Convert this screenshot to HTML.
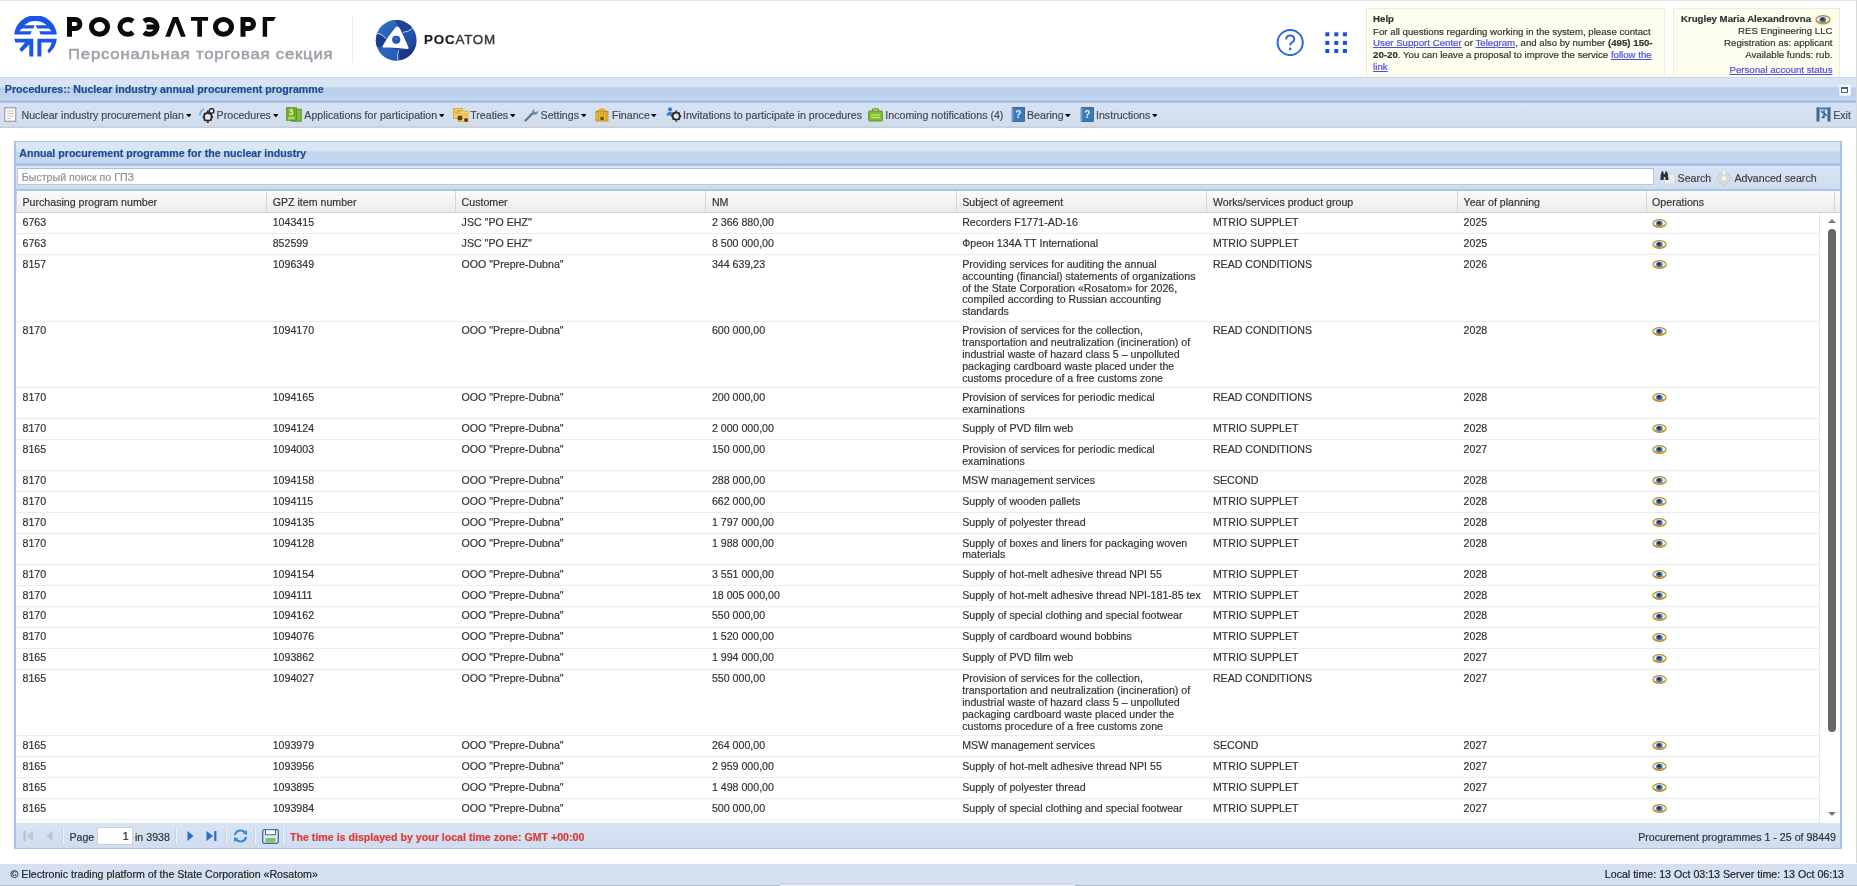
<!DOCTYPE html>
<html><head><meta charset="utf-8">
<style>
*{box-sizing:border-box}
html,body{margin:0;padding:0}
body{width:1857px;height:886px;overflow:hidden;position:relative;will-change:transform;-webkit-text-stroke:0.18px currentColor;background:#fff;font-family:"Liberation Sans",sans-serif;font-size:10.63px;color:#333}
.abs{position:absolute}
.t{position:absolute;white-space:nowrap;line-height:1.117em}
/* header */
#topline{position:absolute;left:0;top:0;width:1857px;height:1px;background:#e2e2e2}
#rline{position:absolute;left:1855.5px;top:0;width:1.5px;height:863px;background:#d8d8d8}
.box{position:absolute;background:#fdfdf0;border:1px solid #f1ecd4;border-bottom:none}
.box a,.lnk{color:#4c4ce0;text-decoration:underline}
/* title bar */
#titlebar{position:absolute;left:0;top:77px;width:1855.5px;height:25.5px;border-top:1px solid #c8d4de;
 background:linear-gradient(#dbe6f4 0px,#d7e3f3 9px,#bad0ea 10px,#bdd2ec 20px,#c8dcf4 21px,#c8dcf4 22px,#a6bfe4 22.5px,#a6bfe4 25.5px)}
#toolbar{position:absolute;left:0;top:102.5px;width:1855.5px;height:25px;background:linear-gradient(#d6e4ee 0px,#d9e0f4 3px,#d4dff0 12px,#d2ddeb 23px,#c6cfd9 24px,#c6cfd9 25px)}
.tb{position:absolute;top:0;height:25px}
.tbt{position:absolute;white-space:nowrap;line-height:11.87px;color:#434a55}
.arr{position:absolute;top:114px;width:0;height:0;border-left:2.7px solid transparent;border-right:2.7px solid transparent;border-top:3.1px solid #000}
/* panel */
#panel{position:absolute;left:13.5px;top:141.3px;width:1828.3px;height:707.9px;border:1px solid #a6c1e6;border-left-width:2px;border-right-width:2px;background:#fff}
#phdr{position:absolute;left:0;top:0;right:0;height:23.4px;background:linear-gradient(#dbe7f5 0px,#d8e5f4 9px,#c3d6ee 10px,#c6d9f0 21px,#a9c4e8 21.4px,#a9c4e8 23.4px)}
#stb{position:absolute;left:0;top:23.4px;right:0;height:26.2px;background:linear-gradient(#dde9f7 0px,#d6e3f2 2px,#d0ddee 22.5px,#a9c4e8 23px,#a9c4e8 26.2px)}
#sinput{position:absolute;left:1.8px;top:2.0px;width:1636.6px;height:17.8px;background:#fff;border:1px solid #c4c8cc;border-top-color:#b8bcc0}
#ghdr{position:absolute;left:0;top:49.2px;right:0;height:21.4px;background:linear-gradient(#fbfbfb,#ececec);border-bottom:1px solid #d0d0d0}
.hc{position:absolute;top:0;height:20.4px;border-left:1px solid #d5d5d5}
.hc span{position:absolute;left:5.5px;top:5.8px;white-space:nowrap;line-height:11.87px;color:#333}
#gbody{position:absolute;left:0;top:71px;right:0;height:609.5px;overflow:hidden;background:#fff}
.row{position:absolute;left:0;width:1803.2px;border-bottom:1px solid #ececec}
.c{position:absolute;top:3.8px;white-space:nowrap;line-height:11.83px;color:#333}
.eye{position:absolute;top:5.3px;width:15px;height:9px;line-height:0}
#sbar{position:absolute;left:1803.5px;top:0;width:20px;height:610.4px;border-left:1px solid #e6e6e6;background:#fff}
#pager{position:absolute;left:0;top:680.5px;right:0;height:25.1px;background:linear-gradient(#d8e4f3,#cfddef)}
.sep{position:absolute;top:4.5px;width:2px;height:17px;border-left:1px solid #c8d5e6;border-right:1px solid #eef3fa}
/* footer */
#footer{position:absolute;left:0;top:863.6px;width:1857px;height:22.4px;background:#d5e1f0;border-bottom:1.5px solid #aab5c2}
</style></head>
<body>
<div id="topline"></div>
<div id="rline"></div>

<!-- ROSELTORG emblem -->
<svg class="abs" style="left:13.5px;top:15.8px" width="43" height="41" viewBox="0 0 43 41">
 <g fill="#1a55e8">
  <path d="M0.2 18.6 A21.4 21.4 0 0 1 42.8 18.6 L26.6 18.6 L25.3 15.2 L37.4 15.2 A17 17 0 0 0 34.9 12.4 L23.2 12.4 L21.8 9.2 L32.8 9.2 A17 17 0 0 0 10.2 9.2 L20.6 9.2 L19.3 12.4 L8.1 12.4 A17 17 0 0 0 5.5 15.2 L17.7 15.2 L16.3 18.6 Z"/>
  <path d="M0.2 22.8 L19.3 22.8 L19.3 40.4 L15.3 40.4 L15.3 28.5 L7.8 36 L5.3 33.3 L11.1 26.6 L1.4 26.6 Z"/>
  <path d="M23.4 22.8 L42.8 22.8 A21.4 21.4 0 0 1 34.8 37.4 L33.4 34.4 A17.2 17.2 0 0 0 37.8 26.6 L27.4 26.6 L27.4 40.4 L23.4 40.4 Z"/>
 </g>
</svg>
<svg class="abs" style="left:0;top:0" width="290" height="45" viewBox="0 0 290 45">
 <g fill="none" stroke="#0a0a0a" stroke-width="5">
  <path d="M69.5 36.7 V19.5 H75.4 A4.5 4.5 0 0 1 75.4 28.5 H69.5"/>
  <ellipse cx="99.5" cy="26.85" rx="8" ry="7.35"/>
  <path d="M133 21.2 A7.9 7.45 0 1 0 133 32.5"/>
  <path d="M144 21.2 A7.9 7.45 0 1 1 144 32.5 M146.5 27 H157.5" />
  <ellipse cx="223.5" cy="26.85" rx="8" ry="7.35"/>
  <path d="M243 36.7 V19.5 H249 A4.5 4.5 0 0 1 249 28.5 H243"/>
 </g>
 <g fill="#0a0a0a">
  <path d="M165.2 36.7 L172.9 17 L178.1 17 L185.8 36.7 L180.9 36.7 L175.5 22.4 L170.1 36.7 Z"/>
  <rect x="191" y="17" width="17.1" height="3.8"/>
  <rect x="197.3" y="17" width="4.7" height="19.7"/>
  <path d="M262.7 17 L275.9 17 L273.6 21 L267.1 21 L267.1 36.7 L262.7 36.7 Z"/>
 </g>
</svg>
<div class="t" style="left:68.3px;top:44.6px;font-size:15.2px;font-weight:400;color:#9ca1a8;letter-spacing:0.72px;-webkit-text-stroke:0.5px #9ca1a8;transform:scaleX(1.1);transform-origin:0 0">Персональная торговая секция</div>
<div class="abs" style="left:351.8px;top:16px;width:1.2px;height:46px;background:#ececec"></div>
<!-- ROSATOM emblem -->
<svg class="abs" style="left:375px;top:19.5px" width="43" height="41" viewBox="0 0 43 41">
 <defs>
  <linearGradient id="rg1" x1="0" y1="0" x2="1" y2="1"><stop offset="0" stop-color="#3278c8"/><stop offset="0.5" stop-color="#2458b0"/><stop offset="1" stop-color="#183888"/></linearGradient>
  <clipPath id="cc"><circle cx="21.2" cy="20.25" r="20.4"/></clipPath>
 </defs>
 <circle cx="21.2" cy="20.25" r="20.4" fill="url(#rg1)"/>
 <g clip-path="url(#cc)">
  <path d="M0 13 Q6 14 11 19 L8 27 L0 27 Z" fill="#1a2f80" opacity="0.75"/>
  <path d="M20 0 L40 0 L38 9 Q32 11 28 13 L23 6 Z" fill="#1a3488" opacity="0.7"/>
  <path d="M24 30 L36 29 L42 22 L42 41 L26 41 Z" fill="#1a3080" opacity="0.7"/>
  <path d="M6 26 L22 30 L22 41 L4 41 Z" fill="#2f70c8" opacity="0.5"/>
 </g>
 <path d="M22 6.6 Q24 6.4 25.5 9.5 L33.6 27.6 Q34 29 32.2 28.9 Q21 27 8.6 27.5 Q6.8 27.4 7.8 25.6 Q14 15 20.2 7.8 Q21 6.8 22 6.6 Z" fill="#fff"/>
 <circle cx="21.2" cy="19.8" r="4.1" fill="#2458b0"/>
 <circle cx="20.6" cy="19" r="1.8" fill="#3a80d0" opacity="0.6"/>
 <path d="M1.5 12.8 Q7 13.8 11.5 19" stroke="#c8dcf6" stroke-width="0.9" fill="none"/>
 <path d="M38 8.2 Q33 12 28 12.3" stroke="#c8dcf6" stroke-width="0.9" fill="none"/>
 <path d="M23.6 30 Q22 34 22.8 40.5" stroke="#c8dcf6" stroke-width="0.9" fill="none"/>
</svg>
<div class="t" style="left:424px;top:32.6px;font-size:13.4px;font-weight:700;color:#1c1c1c;letter-spacing:0.9px">РОС<span style="font-weight:400;color:#3a3a3a;-webkit-text-stroke:0.45px #3a3a3a">АТОМ</span></div>

<!-- help / apps icons -->
<svg class="abs" style="left:1276px;top:29px" width="29" height="27" viewBox="0 0 29 27">
 <circle cx="14.2" cy="13.5" r="12.6" fill="none" stroke="#2c6bd8" stroke-width="2"/>
 <path d="M10.2 10.4 Q10.2 6.6 14.2 6.6 Q18.2 6.6 18.2 10.2 Q18.2 12.4 15.6 13.6 Q14.2 14.3 14.2 16.6" fill="none" stroke="#2c6bd8" stroke-width="2"/>
 <circle cx="14.2" cy="19.9" r="1.3" fill="#2c6bd8"/>
</svg>
<svg class="abs" style="left:1325px;top:32px" width="23" height="22" viewBox="0 0 23 22">
 <g fill="#1c50d8">
 <rect x="0.3" y="0.3" width="4" height="4"/><rect x="9.3" y="0.3" width="4" height="4"/><rect x="17.9" y="0.3" width="4" height="4"/>
 <rect x="0.3" y="8.9" width="4" height="4"/><rect x="9.3" y="8.9" width="4" height="4"/><rect x="17.9" y="8.9" width="4" height="4"/>
 <rect x="0.3" y="17" width="4" height="4"/><rect x="9.3" y="17" width="4" height="4"/><rect x="17.9" y="17" width="4" height="4"/>
 </g>
</svg>

<!-- help box -->
<div class="box" style="left:1365.6px;top:7.7px;width:299.5px;height:70px;font-size:9.67px;line-height:11.8px;color:#333">
 <div class="t" style="left:6.5px;top:4.3px;font-weight:700;line-height:11.8px">Help</div>
 <div class="abs" style="left:6.5px;top:16.9px;width:290px;line-height:11.8px;white-space:nowrap">For all questions regarding working in the system, please contact<br><a>User Support Center</a> or <a>Telegram</a>, and also by number <b>(495) 150-</b><br><b>20-20</b>. You can leave a proposal to improve the service <a>follow the</a><br><a>link</a></div>
</div>
<!-- user box -->
<div class="box" style="left:1673.3px;top:7.7px;width:166.4px;height:70px;font-size:9.67px;color:#333;text-align:right">
 <div class="abs" style="right:6.2px;top:4.5px;line-height:11.8px;white-space:nowrap;font-weight:700">Krugley Maria Alexandrovna<span style="display:inline-block;width:21.5px"></span></div>
 <svg class="abs" style="left:1815px;top:15px;position:fixed" width="16" height="9.5" viewBox="0 0 15 9"><ellipse cx="7.5" cy="4.5" rx="6.6" ry="3.8" fill="#f4f8fb" stroke="#b8953a" stroke-width="1.3"/><path d="M1.6 5.6 Q7.5 9.4 13.4 5.6" fill="none" stroke="#d8902a" stroke-width="1"/><ellipse cx="7.3" cy="4.4" rx="3.2" ry="2.6" fill="#3f6e9c"/><circle cx="6.9" cy="3.9" r="1.2" fill="#102840"/></svg>
 <div class="abs" style="right:6.2px;top:16.8px;line-height:11.8px;white-space:nowrap">RES Engineering LLC<br>Registration as: applicant<br>Available funds: rub.</div>
 <div class="abs" style="right:6.2px;top:55.4px;line-height:11.8px;white-space:nowrap"><a>Personal account status</a></div>
</div>

<!-- title bar -->
<div id="titlebar">
 <div class="t" style="left:4.8px;top:5.7px;font-weight:700;color:#1e4a92;line-height:11.87px">Procedures:: Nuclear industry annual procurement programme</div>
 <div class="abs" style="left:1839px;top:6px;width:11.5px;height:11.5px;background:#fff;border-radius:2px;border:1px solid #e8eef8"><div class="abs" style="left:1.3px;top:2.2px;width:7px;height:5.5px;border:1.2px solid #3b5fa8;border-top-width:2px"></div></div>
</div>

<!-- toolbar -->
<div id="toolbar">
<div class="abs" style="left:3.8px;top:4.7px;line-height:0"><svg width="13" height="15" viewBox="0 0 13 15"><rect x="0.8" y="0.8" width="11" height="13.4" fill="#fcfcfc" stroke="#8a9098" stroke-width="1"/><path d="M3 4h7M3 6.5h7M3 9h7M3 11.5h4" stroke="#c8b090" stroke-width="0.8"/></svg></div>
<div class="tbt" style="left:21.5px;top:7.1px">Nuclear industry procurement plan</div>
<svg class="abs" style="left:185.5px;top:11.5px" width="5.6" height="3.4" viewBox="0 0 5.6 3.4"><path d="M0 0H5.6L2.8 3.4Z" fill="#000"/></svg>
<div class="abs" style="left:199px;top:5.1px;line-height:0"><svg width="16" height="15" viewBox="0 0 16 15"><path d="M0.8 7.5 Q1.5 2.5 4.8 0.8" stroke="#6aaee0" stroke-width="1.6" fill="none"/><g stroke="#2a2a2a" stroke-width="1.9" stroke-linecap="butt"><path d="M8.8 2.6V4.2M8.8 13.6V15M3.6 8.9H5.2M12.4 8.9H14M5.1 5.2L6.2 6.3M11.4 11.5L12.5 12.6M5.1 12.6L6.2 11.5M11.4 6.3L12.5 5.2"/></g><circle cx="8.8" cy="8.9" r="3.9" fill="#e6e6e6" stroke="#2a2a2a" stroke-width="1.9"/><circle cx="12.6" cy="2.9" r="2.3" fill="#f2f2f2" stroke="#2a2a2a" stroke-width="1.5"/></svg></div>
<div class="tbt" style="left:216.6px;top:7.1px">Procedures</div>
<svg class="abs" style="left:272.5px;top:11.5px" width="5.6" height="3.4" viewBox="0 0 5.6 3.4"><path d="M0 0H5.6L2.8 3.4Z" fill="#000"/></svg>
<div class="abs" style="left:286px;top:4.7px;line-height:0"><svg width="16" height="15" viewBox="0 0 16 15"><rect x="5.5" y="2" width="10" height="12.5" fill="#74b030" stroke="#5a9020" stroke-width="0.6"/><path d="M13 4v9" stroke="#c8e890" stroke-width="0.9" stroke-dasharray="1 1"/><rect x="0.5" y="0.5" width="10" height="13" fill="#6eae26" stroke="#4e8a18" stroke-width="0.6"/><text x="2.6" y="8.2" font-size="9" font-weight="700" fill="#e4f6b8" font-family="Liberation Sans">3</text><path d="M2 10.2h6.5M2 11.8h6.5" stroke="#d0f0a0" stroke-width="0.8"/></svg></div>
<div class="tbt" style="left:304.3px;top:7.1px">Applications for participation</div>
<svg class="abs" style="left:438.8px;top:11.5px" width="5.6" height="3.4" viewBox="0 0 5.6 3.4"><path d="M0 0H5.6L2.8 3.4Z" fill="#000"/></svg>
<div class="abs" style="left:452.6px;top:5.0px;line-height:0"><svg width="16" height="14" viewBox="0 0 16 14"><rect x="0.5" y="0.5" width="9" height="10" fill="#f0d060" stroke="#c8a030" stroke-width="0.7"/><rect x="5" y="3" width="10" height="10.5" fill="#f4d868" stroke="#c8a030" stroke-width="0.7"/><path d="M2 3h6M2 5h6M7 6h7M7 8h7" stroke="#c89838" stroke-width="0.6"/><circle cx="7" cy="10" r="2.5" fill="#6a3a10"/><circle cx="13" cy="12" r="2" fill="#6a3a10"/></svg></div>
<div class="tbt" style="left:470.2px;top:7.1px">Treaties</div>
<svg class="abs" style="left:509.8px;top:11.5px" width="5.6" height="3.4" viewBox="0 0 5.6 3.4"><path d="M0 0H5.6L2.8 3.4Z" fill="#000"/></svg>
<div class="abs" style="left:524px;top:5.5px;line-height:0"><svg width="15" height="14" viewBox="0 0 15 14"><path d="M1.5 12.5 L9 5" stroke="#5a7898" stroke-width="2.3" stroke-linecap="round"/><path d="M8 5.5 Q7.5 2 10.5 1 L10 3.5 L12 4.5 L13.8 2.5 Q14.5 6 11 7 Z" fill="#6a88a8"/></svg></div>
<div class="tbt" style="left:540.6px;top:7.1px">Settings</div>
<svg class="abs" style="left:580.6px;top:11.5px" width="5.6" height="3.4" viewBox="0 0 5.6 3.4"><path d="M0 0H5.6L2.8 3.4Z" fill="#000"/></svg>
<div class="abs" style="left:595.4px;top:5.0px;line-height:0"><svg width="14" height="14" viewBox="0 0 14 14"><path d="M0.5 4 L7 0.5 L13.5 4 Z" fill="#e8b830" stroke="#a87810" stroke-width="0.6"/><rect x="1" y="4" width="12" height="8" fill="#f0c040" stroke="#a87810" stroke-width="0.6"/><path d="M3.5 5v6M6 5v6M8.5 5v6M11 5v6" stroke="#b88818" stroke-width="0.8"/><rect x="0.5" y="12" width="13" height="1.6" fill="#d8a020"/><rect x="5.5" y="9" width="3" height="3" fill="#704808"/></svg></div>
<div class="tbt" style="left:612px;top:7.1px">Finance</div>
<svg class="abs" style="left:651.4px;top:11.5px" width="5.6" height="3.4" viewBox="0 0 5.6 3.4"><path d="M0 0H5.6L2.8 3.4Z" fill="#000"/></svg>
<div class="abs" style="left:665.5px;top:4.8px;line-height:0"><svg width="16" height="15" viewBox="0 0 16 15"><circle cx="4" cy="2.4" r="2.1" fill="#3a78c8"/><path d="M0.5 8.5 Q0.5 5 4 5 Q7 5 7.3 7 L7.3 8.5 Z" fill="#3a78c8"/><g stroke="#2a2a2a" stroke-width="1.8"><path d="M10.2 3.6V5M10.2 13.4V14.8M5.2 9.2H6.6M13.8 9.2H15.2M6.7 5.7L7.7 6.7M12.7 11.7L13.7 12.7M6.7 12.7L7.7 11.7M12.7 6.7L13.7 5.7"/></g><circle cx="10.2" cy="9.2" r="3.5" fill="#e8e8e8" stroke="#2a2a2a" stroke-width="1.8"/></svg></div>
<div class="tbt" style="left:683px;top:7.1px">Invitations to participate in procedures</div>
<div class="abs" style="left:868px;top:5.5px;line-height:0"><svg width="15" height="14" viewBox="0 0 15 14"><rect x="4.5" y="0.8" width="6" height="3" rx="1" fill="none" stroke="#5a9a20" stroke-width="1.2"/><rect x="0.6" y="3" width="13.8" height="10" rx="1.2" fill="#80c030" stroke="#4e8818" stroke-width="0.8"/><path d="M3 7h9M3 9.5h9" stroke="#d8f0a8" stroke-width="0.9"/></svg></div>
<div class="tbt" style="left:885.3px;top:7.1px">Incoming notifications (4)</div>
<div class="abs" style="left:1010.5px;top:4.7px;line-height:0"><svg width="14" height="15" viewBox="0 0 14 15"><rect x="1.5" y="0.5" width="12" height="14" fill="#3a78b8" stroke="#24507e" stroke-width="0.7"/><rect x="0.5" y="1" width="2" height="13.5" fill="#6aa0d0"/><text x="4.3" y="11" font-size="10" font-weight="700" fill="#e8f0ff" font-family="Liberation Sans">?</text></svg></div>
<div class="tbt" style="left:1027px;top:7.1px">Bearing</div>
<svg class="abs" style="left:1065.2px;top:11.5px" width="5.6" height="3.4" viewBox="0 0 5.6 3.4"><path d="M0 0H5.6L2.8 3.4Z" fill="#000"/></svg>
<div class="abs" style="left:1079.5px;top:4.7px;line-height:0"><svg width="14" height="15" viewBox="0 0 14 15"><rect x="1.5" y="0.5" width="12" height="14" fill="#3a78b8" stroke="#24507e" stroke-width="0.7"/><rect x="0.5" y="1" width="2" height="13.5" fill="#6aa0d0"/><text x="4.3" y="11" font-size="10" font-weight="700" fill="#e8f0ff" font-family="Liberation Sans">?</text></svg></div>
<div class="tbt" style="left:1096px;top:7.1px">Instructions</div>
<svg class="abs" style="left:1151.9px;top:11.5px" width="5.6" height="3.4" viewBox="0 0 5.6 3.4"><path d="M0 0H5.6L2.8 3.4Z" fill="#000"/></svg>
<div class="abs" style="left:1816px;top:4.8px;line-height:0"><svg width="15" height="15" viewBox="0 0 15 15"><rect x="0.5" y="0.5" width="3" height="14" fill="#3a6898"/><rect x="11.5" y="0.5" width="3" height="14" fill="#3a6898"/><rect x="0.5" y="0.5" width="14" height="2" fill="#4a78a8"/><path d="M5 4 L7 6 M8 3 L8 11 M8 6 L11 9 M6 11 L8 9" stroke="#2a5888" stroke-width="1.3"/></svg></div>
<div class="tbt" style="left:1833.2px;top:7.1px">Exit</div>
</div>

<!-- panel -->
<div id="panel">
 <div id="phdr"><div class="t" style="left:3.8px;top:5.3px;font-weight:700;color:#1e4a92;line-height:11.87px">Annual procurement programme for the nuclear industry</div></div>
 <div id="stb">
  <div id="sinput"><div class="t" style="left:3.5px;top:3.0px;color:#909090;line-height:11.87px">Быстрый поиск по ГПЗ</div></div>
  <div class="abs" style="left:1644.0px;top:5.1px;line-height:0"><svg width="16" height="14" viewBox="0 0 16 14"><rect x="4.6" y="3" width="10.4" height="10" rx="1" fill="#ebebeb" stroke="#d2d2d2" stroke-width="0.8"/><path d="M0.3 9 L0.8 3.5 L1.6 0.6 L3.4 0.6 L3.8 3 L5 3 L5.3 0.6 L7.1 0.6 L7.9 3.5 L8.6 9 L5.4 9 L5.2 6 L3.9 6 L3.6 9 Z" fill="#2e3238"/></svg></div>
<div class="t" style="left:1662.1px;top:7.1px;line-height:11.87px;color:#3a3f48">Search</div>
<div class="abs" style="left:1700.7px;top:3.9px;line-height:0"><svg width="16" height="16" viewBox="0 0 16 16"><path d="M8 0.5 Q10 3 12 3.5 Q13 6 15.5 8 Q13 10 12 12.5 Q10 13 8 15.5 Q6 13 4 12.5 Q3 10 0.5 8 Q3 6 4 3.5 Q6 3 8 0.5 Z" fill="#dcdcdc" stroke="#c4c4c4" stroke-width="0.8"/><circle cx="8" cy="8" r="3.2" fill="#f2f2f2" stroke="#cacaca" stroke-width="0.8"/><circle cx="8" cy="2.6" r="1.3" fill="#fff"/></svg></div>
<div class="t" style="left:1719.0px;top:7.1px;line-height:11.87px;color:#3a3f48">Advanced search</div>
 </div>
 <div id="ghdr"><div class="hc" style="left:0.5px;width:250.2px"><span>Purchasing program number</span></div><div class="hc" style="left:250.7px;width:188.9px"><span>GPZ item number</span></div><div class="hc" style="left:439.6px;width:250.3px"><span>Customer</span></div><div class="hc" style="left:689.9px;width:250.3px"><span>NM</span></div><div class="hc" style="left:940.2px;width:250.7px"><span>Subject of agreement</span></div><div class="hc" style="left:1190.9px;width:250.7px"><span>Works/services product group</span></div><div class="hc" style="left:1441.6px;width:188.5px"><span>Year of planning</span></div><div class="hc" style="left:1630.1px;width:188.8px"><span>Operations</span></div><div class="hc" style="left:1818.9px;width:6px"></div></div>
 <div id="gbody">
<div class="row" style="top:0.00px;height:20.95px"><div class="c" style="left:7.0px">6763</div><div class="c" style="left:257.2px">1043415</div><div class="c" style="left:446.1px">JSC "PO EHZ"</div><div class="c" style="left:696.4px">2 366 880,00</div><div class="c" style="left:946.7px">Recorders F1771-AD-16</div><div class="c" style="left:1197.4px">MTRIO SUPPLET</div><div class="c" style="left:1448.1px">2025</div><div class="eye" style="left:1636.6px"><svg width="15" height="9" viewBox="0 0 15 9"><ellipse cx="7.5" cy="4.5" rx="6.6" ry="3.8" fill="#f4f8fb" stroke="#b8953a" stroke-width="1.3"/><path d="M1.6 5.6 Q7.5 9.4 13.4 5.6" fill="none" stroke="#d8902a" stroke-width="1"/><ellipse cx="7.3" cy="4.4" rx="3.2" ry="2.6" fill="#3f6e9c"/><circle cx="6.9" cy="3.9" r="1.2" fill="#102840"/></svg></div></div>
<div class="row" style="top:20.95px;height:20.95px"><div class="c" style="left:7.0px">6763</div><div class="c" style="left:257.2px">852599</div><div class="c" style="left:446.1px">JSC "PO EHZ"</div><div class="c" style="left:696.4px">8 500 000,00</div><div class="c" style="left:946.7px">Фреон 134A TT International</div><div class="c" style="left:1197.4px">MTRIO SUPPLET</div><div class="c" style="left:1448.1px">2025</div><div class="eye" style="left:1636.6px"><svg width="15" height="9" viewBox="0 0 15 9"><ellipse cx="7.5" cy="4.5" rx="6.6" ry="3.8" fill="#f4f8fb" stroke="#b8953a" stroke-width="1.3"/><path d="M1.6 5.6 Q7.5 9.4 13.4 5.6" fill="none" stroke="#d8902a" stroke-width="1"/><ellipse cx="7.3" cy="4.4" rx="3.2" ry="2.6" fill="#3f6e9c"/><circle cx="6.9" cy="3.9" r="1.2" fill="#102840"/></svg></div></div>
<div class="row" style="top:41.90px;height:66.4px"><div class="c" style="left:7.0px">8157</div><div class="c" style="left:257.2px">1096349</div><div class="c" style="left:446.1px">OOO "Prepre-Dubna"</div><div class="c" style="left:696.4px">344 639,23</div><div class="c" style="left:946.7px">Providing services for auditing the annual<br>accounting (financial) statements of organizations<br>of the State Corporation «Rosatom» for 2026,<br>compiled according to Russian accounting<br>standards</div><div class="c" style="left:1197.4px">READ CONDITIONS</div><div class="c" style="left:1448.1px">2026</div><div class="eye" style="left:1636.6px"><svg width="15" height="9" viewBox="0 0 15 9"><ellipse cx="7.5" cy="4.5" rx="6.6" ry="3.8" fill="#f4f8fb" stroke="#b8953a" stroke-width="1.3"/><path d="M1.6 5.6 Q7.5 9.4 13.4 5.6" fill="none" stroke="#d8902a" stroke-width="1"/><ellipse cx="7.3" cy="4.4" rx="3.2" ry="2.6" fill="#3f6e9c"/><circle cx="6.9" cy="3.9" r="1.2" fill="#102840"/></svg></div></div>
<div class="row" style="top:108.30px;height:66.4px"><div class="c" style="left:7.0px">8170</div><div class="c" style="left:257.2px">1094170</div><div class="c" style="left:446.1px">OOO "Prepre-Dubna"</div><div class="c" style="left:696.4px">600 000,00</div><div class="c" style="left:946.7px">Provision of services for the collection,<br>transportation and neutralization (incineration) of<br>industrial waste of hazard class 5 – unpolluted<br>packaging cardboard waste placed under the<br>customs procedure of a free customs zone</div><div class="c" style="left:1197.4px">READ CONDITIONS</div><div class="c" style="left:1448.1px">2028</div><div class="eye" style="left:1636.6px"><svg width="15" height="9" viewBox="0 0 15 9"><ellipse cx="7.5" cy="4.5" rx="6.6" ry="3.8" fill="#f4f8fb" stroke="#b8953a" stroke-width="1.3"/><path d="M1.6 5.6 Q7.5 9.4 13.4 5.6" fill="none" stroke="#d8902a" stroke-width="1"/><ellipse cx="7.3" cy="4.4" rx="3.2" ry="2.6" fill="#3f6e9c"/><circle cx="6.9" cy="3.9" r="1.2" fill="#102840"/></svg></div></div>
<div class="row" style="top:174.70px;height:31.0px"><div class="c" style="left:7.0px">8170</div><div class="c" style="left:257.2px">1094165</div><div class="c" style="left:446.1px">OOO "Prepre-Dubna"</div><div class="c" style="left:696.4px">200 000,00</div><div class="c" style="left:946.7px">Provision of services for periodic medical<br>examinations</div><div class="c" style="left:1197.4px">READ CONDITIONS</div><div class="c" style="left:1448.1px">2028</div><div class="eye" style="left:1636.6px"><svg width="15" height="9" viewBox="0 0 15 9"><ellipse cx="7.5" cy="4.5" rx="6.6" ry="3.8" fill="#f4f8fb" stroke="#b8953a" stroke-width="1.3"/><path d="M1.6 5.6 Q7.5 9.4 13.4 5.6" fill="none" stroke="#d8902a" stroke-width="1"/><ellipse cx="7.3" cy="4.4" rx="3.2" ry="2.6" fill="#3f6e9c"/><circle cx="6.9" cy="3.9" r="1.2" fill="#102840"/></svg></div></div>
<div class="row" style="top:205.70px;height:20.95px"><div class="c" style="left:7.0px">8170</div><div class="c" style="left:257.2px">1094124</div><div class="c" style="left:446.1px">OOO "Prepre-Dubna"</div><div class="c" style="left:696.4px">2 000 000,00</div><div class="c" style="left:946.7px">Supply of PVD film web</div><div class="c" style="left:1197.4px">MTRIO SUPPLET</div><div class="c" style="left:1448.1px">2028</div><div class="eye" style="left:1636.6px"><svg width="15" height="9" viewBox="0 0 15 9"><ellipse cx="7.5" cy="4.5" rx="6.6" ry="3.8" fill="#f4f8fb" stroke="#b8953a" stroke-width="1.3"/><path d="M1.6 5.6 Q7.5 9.4 13.4 5.6" fill="none" stroke="#d8902a" stroke-width="1"/><ellipse cx="7.3" cy="4.4" rx="3.2" ry="2.6" fill="#3f6e9c"/><circle cx="6.9" cy="3.9" r="1.2" fill="#102840"/></svg></div></div>
<div class="row" style="top:226.65px;height:31.0px"><div class="c" style="left:7.0px">8165</div><div class="c" style="left:257.2px">1094003</div><div class="c" style="left:446.1px">OOO "Prepre-Dubna"</div><div class="c" style="left:696.4px">150 000,00</div><div class="c" style="left:946.7px">Provision of services for periodic medical<br>examinations</div><div class="c" style="left:1197.4px">READ CONDITIONS</div><div class="c" style="left:1448.1px">2027</div><div class="eye" style="left:1636.6px"><svg width="15" height="9" viewBox="0 0 15 9"><ellipse cx="7.5" cy="4.5" rx="6.6" ry="3.8" fill="#f4f8fb" stroke="#b8953a" stroke-width="1.3"/><path d="M1.6 5.6 Q7.5 9.4 13.4 5.6" fill="none" stroke="#d8902a" stroke-width="1"/><ellipse cx="7.3" cy="4.4" rx="3.2" ry="2.6" fill="#3f6e9c"/><circle cx="6.9" cy="3.9" r="1.2" fill="#102840"/></svg></div></div>
<div class="row" style="top:257.65px;height:20.95px"><div class="c" style="left:7.0px">8170</div><div class="c" style="left:257.2px">1094158</div><div class="c" style="left:446.1px">OOO "Prepre-Dubna"</div><div class="c" style="left:696.4px">288 000,00</div><div class="c" style="left:946.7px">MSW management services</div><div class="c" style="left:1197.4px">SECOND</div><div class="c" style="left:1448.1px">2028</div><div class="eye" style="left:1636.6px"><svg width="15" height="9" viewBox="0 0 15 9"><ellipse cx="7.5" cy="4.5" rx="6.6" ry="3.8" fill="#f4f8fb" stroke="#b8953a" stroke-width="1.3"/><path d="M1.6 5.6 Q7.5 9.4 13.4 5.6" fill="none" stroke="#d8902a" stroke-width="1"/><ellipse cx="7.3" cy="4.4" rx="3.2" ry="2.6" fill="#3f6e9c"/><circle cx="6.9" cy="3.9" r="1.2" fill="#102840"/></svg></div></div>
<div class="row" style="top:278.60px;height:20.95px"><div class="c" style="left:7.0px">8170</div><div class="c" style="left:257.2px">1094115</div><div class="c" style="left:446.1px">OOO "Prepre-Dubna"</div><div class="c" style="left:696.4px">662 000,00</div><div class="c" style="left:946.7px">Supply of wooden pallets</div><div class="c" style="left:1197.4px">MTRIO SUPPLET</div><div class="c" style="left:1448.1px">2028</div><div class="eye" style="left:1636.6px"><svg width="15" height="9" viewBox="0 0 15 9"><ellipse cx="7.5" cy="4.5" rx="6.6" ry="3.8" fill="#f4f8fb" stroke="#b8953a" stroke-width="1.3"/><path d="M1.6 5.6 Q7.5 9.4 13.4 5.6" fill="none" stroke="#d8902a" stroke-width="1"/><ellipse cx="7.3" cy="4.4" rx="3.2" ry="2.6" fill="#3f6e9c"/><circle cx="6.9" cy="3.9" r="1.2" fill="#102840"/></svg></div></div>
<div class="row" style="top:299.55px;height:20.95px"><div class="c" style="left:7.0px">8170</div><div class="c" style="left:257.2px">1094135</div><div class="c" style="left:446.1px">OOO "Prepre-Dubna"</div><div class="c" style="left:696.4px">1 797 000,00</div><div class="c" style="left:946.7px">Supply of polyester thread</div><div class="c" style="left:1197.4px">MTRIO SUPPLET</div><div class="c" style="left:1448.1px">2028</div><div class="eye" style="left:1636.6px"><svg width="15" height="9" viewBox="0 0 15 9"><ellipse cx="7.5" cy="4.5" rx="6.6" ry="3.8" fill="#f4f8fb" stroke="#b8953a" stroke-width="1.3"/><path d="M1.6 5.6 Q7.5 9.4 13.4 5.6" fill="none" stroke="#d8902a" stroke-width="1"/><ellipse cx="7.3" cy="4.4" rx="3.2" ry="2.6" fill="#3f6e9c"/><circle cx="6.9" cy="3.9" r="1.2" fill="#102840"/></svg></div></div>
<div class="row" style="top:320.50px;height:31.0px"><div class="c" style="left:7.0px">8170</div><div class="c" style="left:257.2px">1094128</div><div class="c" style="left:446.1px">OOO "Prepre-Dubna"</div><div class="c" style="left:696.4px">1 988 000,00</div><div class="c" style="left:946.7px">Supply of boxes and liners for packaging woven<br>materials</div><div class="c" style="left:1197.4px">MTRIO SUPPLET</div><div class="c" style="left:1448.1px">2028</div><div class="eye" style="left:1636.6px"><svg width="15" height="9" viewBox="0 0 15 9"><ellipse cx="7.5" cy="4.5" rx="6.6" ry="3.8" fill="#f4f8fb" stroke="#b8953a" stroke-width="1.3"/><path d="M1.6 5.6 Q7.5 9.4 13.4 5.6" fill="none" stroke="#d8902a" stroke-width="1"/><ellipse cx="7.3" cy="4.4" rx="3.2" ry="2.6" fill="#3f6e9c"/><circle cx="6.9" cy="3.9" r="1.2" fill="#102840"/></svg></div></div>
<div class="row" style="top:351.50px;height:20.95px"><div class="c" style="left:7.0px">8170</div><div class="c" style="left:257.2px">1094154</div><div class="c" style="left:446.1px">OOO "Prepre-Dubna"</div><div class="c" style="left:696.4px">3 551 000,00</div><div class="c" style="left:946.7px">Supply of hot-melt adhesive thread NPI 55</div><div class="c" style="left:1197.4px">MTRIO SUPPLET</div><div class="c" style="left:1448.1px">2028</div><div class="eye" style="left:1636.6px"><svg width="15" height="9" viewBox="0 0 15 9"><ellipse cx="7.5" cy="4.5" rx="6.6" ry="3.8" fill="#f4f8fb" stroke="#b8953a" stroke-width="1.3"/><path d="M1.6 5.6 Q7.5 9.4 13.4 5.6" fill="none" stroke="#d8902a" stroke-width="1"/><ellipse cx="7.3" cy="4.4" rx="3.2" ry="2.6" fill="#3f6e9c"/><circle cx="6.9" cy="3.9" r="1.2" fill="#102840"/></svg></div></div>
<div class="row" style="top:372.45px;height:20.95px"><div class="c" style="left:7.0px">8170</div><div class="c" style="left:257.2px">1094111</div><div class="c" style="left:446.1px">OOO "Prepre-Dubna"</div><div class="c" style="left:696.4px">18 005 000,00</div><div class="c" style="left:946.7px">Supply of hot-melt adhesive thread NPI-181-85 tex</div><div class="c" style="left:1197.4px">MTRIO SUPPLET</div><div class="c" style="left:1448.1px">2028</div><div class="eye" style="left:1636.6px"><svg width="15" height="9" viewBox="0 0 15 9"><ellipse cx="7.5" cy="4.5" rx="6.6" ry="3.8" fill="#f4f8fb" stroke="#b8953a" stroke-width="1.3"/><path d="M1.6 5.6 Q7.5 9.4 13.4 5.6" fill="none" stroke="#d8902a" stroke-width="1"/><ellipse cx="7.3" cy="4.4" rx="3.2" ry="2.6" fill="#3f6e9c"/><circle cx="6.9" cy="3.9" r="1.2" fill="#102840"/></svg></div></div>
<div class="row" style="top:393.40px;height:20.95px"><div class="c" style="left:7.0px">8170</div><div class="c" style="left:257.2px">1094162</div><div class="c" style="left:446.1px">OOO "Prepre-Dubna"</div><div class="c" style="left:696.4px">550 000,00</div><div class="c" style="left:946.7px">Supply of special clothing and special footwear</div><div class="c" style="left:1197.4px">MTRIO SUPPLET</div><div class="c" style="left:1448.1px">2028</div><div class="eye" style="left:1636.6px"><svg width="15" height="9" viewBox="0 0 15 9"><ellipse cx="7.5" cy="4.5" rx="6.6" ry="3.8" fill="#f4f8fb" stroke="#b8953a" stroke-width="1.3"/><path d="M1.6 5.6 Q7.5 9.4 13.4 5.6" fill="none" stroke="#d8902a" stroke-width="1"/><ellipse cx="7.3" cy="4.4" rx="3.2" ry="2.6" fill="#3f6e9c"/><circle cx="6.9" cy="3.9" r="1.2" fill="#102840"/></svg></div></div>
<div class="row" style="top:414.35px;height:20.95px"><div class="c" style="left:7.0px">8170</div><div class="c" style="left:257.2px">1094076</div><div class="c" style="left:446.1px">OOO "Prepre-Dubna"</div><div class="c" style="left:696.4px">1 520 000,00</div><div class="c" style="left:946.7px">Supply of cardboard wound bobbins</div><div class="c" style="left:1197.4px">MTRIO SUPPLET</div><div class="c" style="left:1448.1px">2028</div><div class="eye" style="left:1636.6px"><svg width="15" height="9" viewBox="0 0 15 9"><ellipse cx="7.5" cy="4.5" rx="6.6" ry="3.8" fill="#f4f8fb" stroke="#b8953a" stroke-width="1.3"/><path d="M1.6 5.6 Q7.5 9.4 13.4 5.6" fill="none" stroke="#d8902a" stroke-width="1"/><ellipse cx="7.3" cy="4.4" rx="3.2" ry="2.6" fill="#3f6e9c"/><circle cx="6.9" cy="3.9" r="1.2" fill="#102840"/></svg></div></div>
<div class="row" style="top:435.30px;height:20.95px"><div class="c" style="left:7.0px">8165</div><div class="c" style="left:257.2px">1093862</div><div class="c" style="left:446.1px">OOO "Prepre-Dubna"</div><div class="c" style="left:696.4px">1 994 000,00</div><div class="c" style="left:946.7px">Supply of PVD film web</div><div class="c" style="left:1197.4px">MTRIO SUPPLET</div><div class="c" style="left:1448.1px">2027</div><div class="eye" style="left:1636.6px"><svg width="15" height="9" viewBox="0 0 15 9"><ellipse cx="7.5" cy="4.5" rx="6.6" ry="3.8" fill="#f4f8fb" stroke="#b8953a" stroke-width="1.3"/><path d="M1.6 5.6 Q7.5 9.4 13.4 5.6" fill="none" stroke="#d8902a" stroke-width="1"/><ellipse cx="7.3" cy="4.4" rx="3.2" ry="2.6" fill="#3f6e9c"/><circle cx="6.9" cy="3.9" r="1.2" fill="#102840"/></svg></div></div>
<div class="row" style="top:456.25px;height:66.4px"><div class="c" style="left:7.0px">8165</div><div class="c" style="left:257.2px">1094027</div><div class="c" style="left:446.1px">OOO "Prepre-Dubna"</div><div class="c" style="left:696.4px">550 000,00</div><div class="c" style="left:946.7px">Provision of services for the collection,<br>transportation and neutralization (incineration) of<br>industrial waste of hazard class 5 – unpolluted<br>packaging cardboard waste placed under the<br>customs procedure of a free customs zone</div><div class="c" style="left:1197.4px">READ CONDITIONS</div><div class="c" style="left:1448.1px">2027</div><div class="eye" style="left:1636.6px"><svg width="15" height="9" viewBox="0 0 15 9"><ellipse cx="7.5" cy="4.5" rx="6.6" ry="3.8" fill="#f4f8fb" stroke="#b8953a" stroke-width="1.3"/><path d="M1.6 5.6 Q7.5 9.4 13.4 5.6" fill="none" stroke="#d8902a" stroke-width="1"/><ellipse cx="7.3" cy="4.4" rx="3.2" ry="2.6" fill="#3f6e9c"/><circle cx="6.9" cy="3.9" r="1.2" fill="#102840"/></svg></div></div>
<div class="row" style="top:522.65px;height:20.95px"><div class="c" style="left:7.0px">8165</div><div class="c" style="left:257.2px">1093979</div><div class="c" style="left:446.1px">OOO "Prepre-Dubna"</div><div class="c" style="left:696.4px">264 000,00</div><div class="c" style="left:946.7px">MSW management services</div><div class="c" style="left:1197.4px">SECOND</div><div class="c" style="left:1448.1px">2027</div><div class="eye" style="left:1636.6px"><svg width="15" height="9" viewBox="0 0 15 9"><ellipse cx="7.5" cy="4.5" rx="6.6" ry="3.8" fill="#f4f8fb" stroke="#b8953a" stroke-width="1.3"/><path d="M1.6 5.6 Q7.5 9.4 13.4 5.6" fill="none" stroke="#d8902a" stroke-width="1"/><ellipse cx="7.3" cy="4.4" rx="3.2" ry="2.6" fill="#3f6e9c"/><circle cx="6.9" cy="3.9" r="1.2" fill="#102840"/></svg></div></div>
<div class="row" style="top:543.60px;height:20.95px"><div class="c" style="left:7.0px">8165</div><div class="c" style="left:257.2px">1093956</div><div class="c" style="left:446.1px">OOO "Prepre-Dubna"</div><div class="c" style="left:696.4px">2 959 000,00</div><div class="c" style="left:946.7px">Supply of hot-melt adhesive thread NPI 55</div><div class="c" style="left:1197.4px">MTRIO SUPPLET</div><div class="c" style="left:1448.1px">2027</div><div class="eye" style="left:1636.6px"><svg width="15" height="9" viewBox="0 0 15 9"><ellipse cx="7.5" cy="4.5" rx="6.6" ry="3.8" fill="#f4f8fb" stroke="#b8953a" stroke-width="1.3"/><path d="M1.6 5.6 Q7.5 9.4 13.4 5.6" fill="none" stroke="#d8902a" stroke-width="1"/><ellipse cx="7.3" cy="4.4" rx="3.2" ry="2.6" fill="#3f6e9c"/><circle cx="6.9" cy="3.9" r="1.2" fill="#102840"/></svg></div></div>
<div class="row" style="top:564.55px;height:20.95px"><div class="c" style="left:7.0px">8165</div><div class="c" style="left:257.2px">1093895</div><div class="c" style="left:446.1px">OOO "Prepre-Dubna"</div><div class="c" style="left:696.4px">1 498 000,00</div><div class="c" style="left:946.7px">Supply of polyester thread</div><div class="c" style="left:1197.4px">MTRIO SUPPLET</div><div class="c" style="left:1448.1px">2027</div><div class="eye" style="left:1636.6px"><svg width="15" height="9" viewBox="0 0 15 9"><ellipse cx="7.5" cy="4.5" rx="6.6" ry="3.8" fill="#f4f8fb" stroke="#b8953a" stroke-width="1.3"/><path d="M1.6 5.6 Q7.5 9.4 13.4 5.6" fill="none" stroke="#d8902a" stroke-width="1"/><ellipse cx="7.3" cy="4.4" rx="3.2" ry="2.6" fill="#3f6e9c"/><circle cx="6.9" cy="3.9" r="1.2" fill="#102840"/></svg></div></div>
<div class="row" style="top:585.50px;height:20.95px"><div class="c" style="left:7.0px">8165</div><div class="c" style="left:257.2px">1093984</div><div class="c" style="left:446.1px">OOO "Prepre-Dubna"</div><div class="c" style="left:696.4px">500 000,00</div><div class="c" style="left:946.7px">Supply of special clothing and special footwear</div><div class="c" style="left:1197.4px">MTRIO SUPPLET</div><div class="c" style="left:1448.1px">2027</div><div class="eye" style="left:1636.6px"><svg width="15" height="9" viewBox="0 0 15 9"><ellipse cx="7.5" cy="4.5" rx="6.6" ry="3.8" fill="#f4f8fb" stroke="#b8953a" stroke-width="1.3"/><path d="M1.6 5.6 Q7.5 9.4 13.4 5.6" fill="none" stroke="#d8902a" stroke-width="1"/><ellipse cx="7.3" cy="4.4" rx="3.2" ry="2.6" fill="#3f6e9c"/><circle cx="6.9" cy="3.9" r="1.2" fill="#102840"/></svg></div></div>
  <div id="sbar">
   <div class="abs" style="left:7.5px;top:5.3px;width:0;height:0;border-left:4.3px solid transparent;border-right:4.3px solid transparent;border-bottom:4.5px solid #7a7a7a"></div>
   <div class="abs" style="left:7.5px;top:16px;width:8.7px;height:502.4px;background:#686868;border-radius:4.4px"></div>
   <div class="abs" style="left:7.5px;top:598.6px;width:0;height:0;border-left:4.3px solid transparent;border-right:4.3px solid transparent;border-top:4.5px solid #7a7a7a"></div>
  </div>
 </div>
 <div id="pager">
<div class="abs" style="left:7.8px;top:8.4px;line-height:0"><svg width="11" height="10" viewBox="0 0 11 10"><rect x="0.5" y="0" width="2" height="10" fill="#b8bcc4"/><path d="M10 0 L3.5 5 L10 10 Z" fill="#c0c4cc"/></svg></div>
<div class="abs" style="left:30.5px;top:8.4px;line-height:0"><svg width="7" height="10" viewBox="0 0 7 10"><path d="M6.5 0 L0.5 5 L6.5 10 Z" fill="#c0c4cc"/></svg></div>
<div class="sep" style="left:46.3px"></div>
<div class="t" style="left:53.9px;top:8.9px;line-height:11.87px;color:#333">Page</div>
<div class="abs" style="left:81.2px;top:3.9px;width:35.9px;height:18px;background:#fff;border:1px solid #c9d2de"><div class="t" style="right:3px;top:3.6px;line-height:11.87px;color:#222">1</div></div>
<div class="t" style="left:119.5px;top:8.9px;line-height:11.87px;color:#333">in 3938</div>
<div class="sep" style="left:159.3px"></div>
<div class="abs" style="left:171.8px;top:8.4px;line-height:0"><svg width="7" height="10" viewBox="0 0 7 10"><path d="M0.5 0 L6.5 5 L0.5 10 Z" fill="#2a6cc8"/></svg></div>
<div class="abs" style="left:190.5px;top:8.4px;line-height:0"><svg width="11" height="10" viewBox="0 0 11 10"><path d="M0.5 0 L7 5 L0.5 10 Z" fill="#2a6cc8"/><rect x="8.2" y="0" width="2.2" height="10" fill="#2a6cc8"/></svg></div>
<div class="sep" style="left:209.7px"></div>
<div class="abs" style="left:217.9px;top:6.7px;line-height:0"><svg width="15" height="14" viewBox="0 0 15 14"><path d="M2 6 Q3 1.5 7.5 1.5 Q10.5 1.5 12 3.5" stroke="#3a88d8" stroke-width="2.2" fill="none"/><path d="M13 8 Q12 12.5 7.5 12.5 Q4.5 12.5 3 10.5" stroke="#3a88d8" stroke-width="2.2" fill="none"/><path d="M10 4.5 L14 1 L14 6 Z" fill="#3a88d8"/><path d="M5 9.5 L1 13 L1 8 Z" fill="#3a88d8"/></svg></div>
<div class="sep" style="left:238.3px"></div>
<div class="abs" style="left:246.0px;top:6.2px;line-height:0"><svg width="17" height="15" viewBox="0 0 17 15"><rect x="0.7" y="0.7" width="15.6" height="13.6" rx="1.5" fill="#d8e8f8" stroke="#3a6aa8" stroke-width="1.3"/><rect x="3.5" y="0.7" width="10" height="5" fill="#fff" stroke="#3a6aa8" stroke-width="1"/><rect x="3.5" y="9" width="10" height="4.5" fill="#8ac060"/></svg></div>
<div class="sep" style="left:266.7px"></div>
<div class="t" style="left:274.5px;top:8.9px;line-height:11.87px;color:#e03838;font-weight:700">The time is displayed by your local time zone: GMT +00:00</div>
<div class="t" style="right:3.8px;top:8.9px;line-height:11.87px;color:#333">Procurement programmes 1 - 25 of 98449</div>
 </div>
</div>

<div id="footer">
 <div class="t" style="left:10.6px;top:5.2px;line-height:11.87px;color:#222">© Electronic trading platform of the State Corporation «Rosatom»</div>
 <div class="t" style="right:13px;top:5.2px;line-height:11.87px;color:#222">Local time: 13 Oct 03:13 Server time: 13 Oct 06:13</div>
</div>
<div class="abs" style="left:780px;top:883px;width:295px;height:1.6px;background:#cfd9e6"></div><div class="abs" style="left:780px;top:884.6px;width:295px;height:1.4px;background:#f6f8fb"></div>
</body></html>
